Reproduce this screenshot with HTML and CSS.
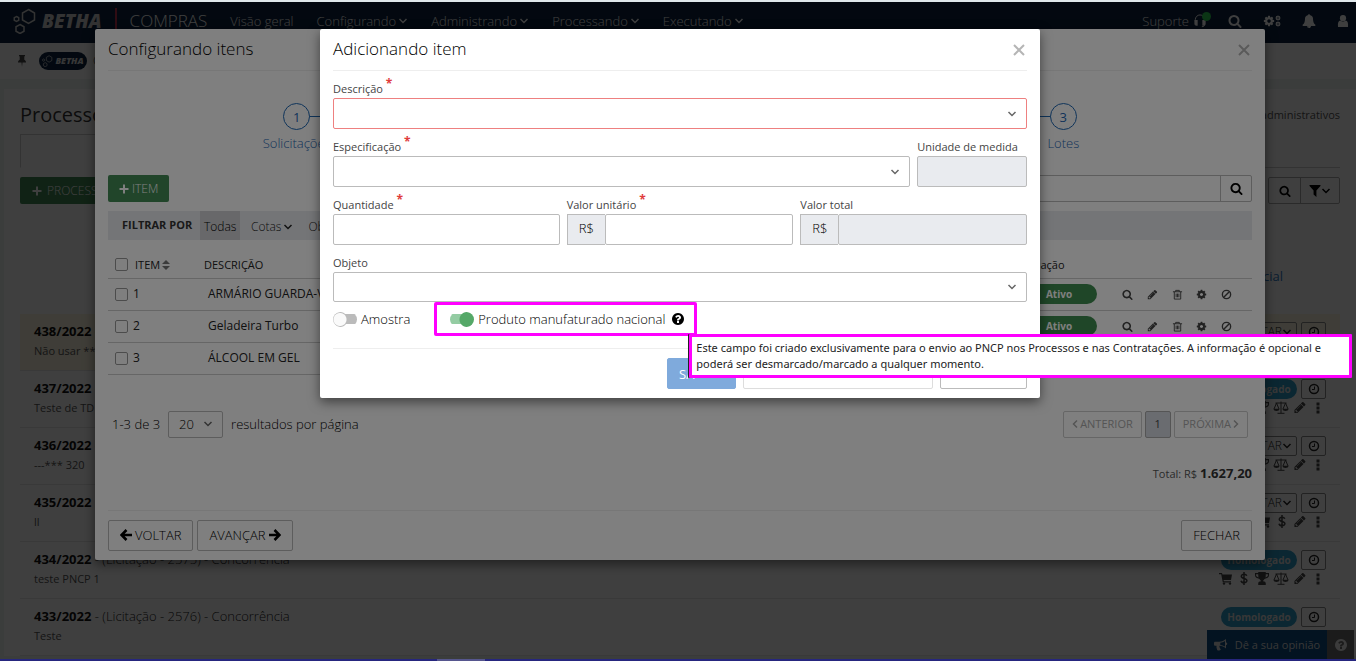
FILE: index.html
```html
<!DOCTYPE html>
<html lang="pt-BR">
<head>
<meta charset="utf-8">
<title>Compras - Processos administrativos</title>
<link rel="stylesheet" href="styles.css">
</head>
<body>
<svg class="sprite" aria-hidden="true">
  <symbol id="search" viewBox="0 0 1792 1792"><path d="M1216 832q0-185-131.500-316.500t-316.500-131.500-316.500 131.500-131.500 316.500 131.500 316.500 316.500 131.500 316.500-131.500 131.500-316.500zm512 832q0 52-38 90t-90 38q-54 0-90-38l-343-342q-179 124-399 124-143 0-273.500-55.500t-225-150-150-225-55.500-273.500 55.500-273.500 150-225 225-150 273.500-55.500 273.500 55.500 225 150 150 225 55.500 273.500q0 220-124 399l343 343q37 37 37 90z"/></symbol>
  <symbol id="pencil" viewBox="0 0 1792 1792"><path d="M491 1536l91-91-235-235-91 91v107h128v128h107zm523-928q0-22-22-22-10 0-17 7l-542 542q-7 7-7 17 0 22 22 22 10 0 17-7l542-542q7-7 7-17zm-54-192l416 416-832 832h-416v-416zm683 96q0 53-37 90l-166 166-416-416 166-165q36-38 90-38 53 0 91 38l235 234q37 39 37 91z"/></symbol>
  <symbol id="bell" viewBox="0 0 1792 1792"><path d="M912 1696q0-16-16-16-59 0-101.500-42.500t-42.500-101.500q0-16-16-16t-16 16q0 73 51.500 124.500t124.500 51.500q16 0 16-16zm816-288q0 52-38 90t-90 38h-448q0 106-75 181t-181 75-181-75-75-181h-448q-52 0-90-38t-38-90q50-42 91-88t85-119.500 74.500-158.500 50-206 19.500-260q0-152 117-282.500t307-158.500q-8-19-8-39 0-40 28-68t68-28 68 28 28 68q0 20-8 39 190 28 307 158.500t117 282.500q0 139 19.500 260t50 206 74.500 158.500 85 119.500 91 88z"/></symbol>
  <symbol id="help" viewBox="0 0 1792 1792"><path d="M1024 1376v-192q0-14-9-23t-23-9h-192q-14 0-23 9t-9 23v192q0 14 9 23t23 9h192q14 0 23-9t9-23zm256-672q0-88-55.500-163t-138.500-116-170-41q-243 0-371 213-15 24 8 42l132 100q7 6 19 6 16 0 25-12 53-68 86-92 34-24 86-24 48 0 85.500 26t37.500 59q0 38-20 61t-68 45q-63 28-115.500 86.500t-52.500 125.500v36q0 14 9 23t23 9h192q14 0 23-9t9-23q0-19 21.500-49.500t54.500-49.500q32-18 49-28.500t46-35 44.500-48 28-60.500 12.500-81zm384 192q0 209-103 385.500t-279.500 279.500-385.500 103-385.500-103-279.500-279.500-103-385.500 103-385.500 279.500-279.500 385.500-103 385.500 103 279.500 279.500 103 385.500z"/></symbol>
  <symbol id="cog" viewBox="0 0 1792 1792"><path d="M1152 896q0-106-75-181t-181-75-181 75-75 181 75 181 181 75 181-75 75-181zm512-109v222q0 12-8 23t-20 13l-185 28q-19 54-39 91 35 50 107 138 10 12 10 25t-9 23q-27 37-99 108t-94 71q-12 0-26-9l-138-108q-44 23-91 38-16 136-29 186-7 28-36 28h-222q-14 0-24.500-8.500t-11.500-21.500l-28-184q-49-16-90-37l-141 107q-10 9-25 9-14 0-25-11-126-114-165-168-7-10-7-23 0-12 8-23 15-21 51-66.500t54-70.500q-27-50-41-99l-183-27q-13-2-21-12.500t-8-23.500v-222q0-12 8-23t19-13l186-28q14-46 39-92-40-57-107-138-10-12-10-24 0-10 9-23 26-36 98.500-107.500t94.500-71.500q13 0 26 10l138 107q44-23 91-38 16-136 29-186 7-28 36-28h222q14 0 24.500 8.500t11.500 21.500l28 184q49 16 90 37l142-107q9-9 24-9 13 0 25 10 129 119 165 170 7 8 7 22 0 12-8 23-15 21-51 66.500t-54 70.500q26 50 41 98l183 28q13 2 21 12.500t8 23.500z"/></symbol>
  <symbol id="chevron" viewBox="0 0 10 10"><path class="line" d="M1.500 3l3.500 3.500L8.500 3"/></symbol>
  <symbol id="left" viewBox="0 0 6 10"><path class="line" d="M5 1.500L1.500 5 5 8.500"/></symbol>
  <symbol id="right" viewBox="0 0 6 10"><path class="line" d="M1 1.500L4.500 5 1 8.500"/></symbol>
  <symbol id="close" viewBox="0 0 12 12"><path class="bold" d="M1 1l10 10M11 1L1 11"/></symbol>
  <symbol id="plus" viewBox="0 0 10 10"><path class="bold" d="M5 .5v9M.5 5h9"/></symbol>
  <symbol id="arrow-left" viewBox="0 0 12 12"><path class="thick" d="M6.500 1L1.500 6l5 5M2 6h10"/></symbol>
  <symbol id="arrow-right" viewBox="0 0 12 12"><path class="thick" d="M5.500 1l5 5-5 5M10 6H0"/></symbol>
  <symbol id="trash" viewBox="0 0 12 12"><path class="thin" d="M1 3h10M4 3V1.500h4V3M2.500 3v8h7V3M4.500 5v4M6 5v4M7.500 5v4"/></symbol>
  <symbol id="ban" viewBox="0 0 12 12"><circle class="line" cx="6" cy="6" r="4.500"/><path class="line" d="M9 3L3 9"/></symbol>
  <symbol id="clock" viewBox="0 0 12 12"><circle class="line" cx="6" cy="6" r="4.500"/><path class="thin" d="M6.500 3.500v3H4"/></symbol>
  <symbol id="cart" viewBox="0 0 14 13"><path d="M0 1h3l.4 1.500H13L12 8H4.600l.2 1.200H12v1.200H3.800L2.200 2.200H0z"/><circle cx="5" cy="11.600" r="1.200"/><circle cx="11" cy="11.600" r="1.200"/></symbol>
  <symbol id="dollar" viewBox="0 0 8 13"><path class="line" d="M6.800 3.800C6.300 2.600 5.200 2.200 4 2.200 2.500 2.200 1.300 3 1.300 4.200c0 3 5.600 1.400 5.600 4.400C6.900 10 5.600 10.800 4 10.800S1.300 10 1 8.800M4 0v13"/></symbol>
  <symbol id="trophy" viewBox="0 0 13 12"><path d="M3 0h7v1h3v2c0 2-2 3-3.700 3.200C8.500 7 7.500 7.500 7.500 8.500c1.500 0 2.500.7 2.500 2V12H3v-1.500c0-1.300 1-2 2.500-2 0-1-1-1.500-1.800-2.300C2 6 0 5 0 3V1h3zM1 2v1c0 1 1 1.700 2.200 2C3 4 3 3 3 2zm9 0c0 1 0 2-.2 3C11 4.700 12 4 12 3V2z"/></symbol>
  <symbol id="scale" viewBox="0 0 16 13"><path class="thin" d="M2.500 2h11M8 .5v11.800M4.500 12.300h7M3.500 2L1 8M3.500 2L6 8M12.500 2L10 8M12.500 2L15 8"/><path d="M.5 7.800h6C6.500 9.500 5 10 3.500 10S.5 9.500.5 7.800zm9 0h6c0 1.700-1.500 2.200-3 2.200s-3-.5-3-2.200z"/></symbol>
  <symbol id="dots" viewBox="0 0 4 12"><path d="M.5.500h3v3h-3zM.5 4.500h3v3h-3zM.5 8.500h3v3h-3z"/></symbol>
  <symbol id="user" viewBox="0 0 12 12"><circle cx="6" cy="3.200" r="3.100"/><path d="M1 12C.6 8 1.500 5.800 3.300 5.600c1.500 1.400 3.900 1.400 5.400 0C10.500 5.800 11.400 8 11 12z"/></symbol>
  <symbol id="headset" viewBox="0 0 14 15"><path class="thin" d="M2 8V6a5 5 0 0 1 10 0v5.500c0 1.500-1 2-3 2"/><path d="M1 6.500h3.500v6H3c-1.200 0-2-.8-2-2zM9.500 6.500H13v4c0 1.200-.8 2-2 2H9.500z"/></symbol>
  <symbol id="funnel" viewBox="0 0 10 11"><path d="M0 0h10v1L6.300 5v6L3.700 8.800V5L0 1z"/></symbol>
  <symbol id="pin" viewBox="0 0 10 12"><path d="M2 0h6v1.200H7.300v3.600C8.500 5.400 9 6.300 9 7.500H5.500L5 12l-.5-4.500H1c0-1.200.5-2.100 1.700-2.700V1.200H2z"/></symbol>
  <symbol id="horn" viewBox="0 0 14 12"><path d="M12 0v3.500a1.200 1.200 0 0 1 0 2.500v3.500C10 7.800 8 7 5.500 6.800 5 8 6 9 6.800 10.500 6 11.800 4 11.800 3.200 11 3 9.500 2 8.500 2.600 6.800H1.300C.5 6.800 0 6.300 0 5.500V4c0-.8.5-1.300 1.300-1.300H5C8 2.700 10 1.600 12 0zm-1 2C9.500 3 8 3.500 6.300 3.700v2.200C8 6 9.500 6.500 11 7.500z"/></symbol>
  <symbol id="sort" viewBox="0 0 8 10"><path d="M4 0l4 4H0zM4 10L0 6h8z"/></symbol>
  <symbol id="hexes" viewBox="0 0 24 26"><path class="line" d="M15.500 1.500l6 3.500v7l-6 3.500-6-3.500V5zM7 16.500l4 2.300v4.400l-4 2.300-4-2.300v-4.400zM3.500 8.500l2.200 1.200v2.600l-2.200 1.200-2.200-1.200V9.700z"/></symbol>
</svg>

<div class="strip-top"></div>

<div class="app">
  <header class="nav">
    <a class="logo" href="#"><svg class="hexes"><use href="#hexes"/></svg><span>BETHA</span></a>
    <span class="product">COMPRAS</span>
    <nav class="menu">
      <a href="#">Visão geral</a>
      <a href="#">Configurando<svg class="i10"><use href="#chevron"/></svg></a>
      <a href="#">Administrando<svg class="i10"><use href="#chevron"/></svg></a>
      <a href="#">Processando<svg class="i10"><use href="#chevron"/></svg></a>
      <a href="#">Executando<svg class="i10"><use href="#chevron"/></svg></a>
    </nav>
    <div class="tools">
      <a class="support" href="#">Suporte<svg class="i14"><use href="#headset"/></svg><i></i></a>
      <a href="#" aria-label="Pesquisar"><svg class="i14"><use href="#search"/></svg></a>
      <a class="cogs" href="#" aria-label="Ferramentas"><svg class="i12"><use href="#cog"/></svg><span><svg><use href="#cog"/></svg><svg><use href="#cog"/></svg></span></a>
      <a href="#" aria-label="Notificações"><svg class="i14"><use href="#bell"/></svg></a>
      <a href="#" aria-label="Usuário"><svg class="i12"><use href="#user"/></svg></a>
    </div>
  </header>

  <div class="favorites">
    <svg class="i12"><use href="#pin"/></svg>
    <span class="chip"><svg><use href="#hexes"/></svg>BETHA</span>
    <span>C</span>
  </div>

  <main class="panel">
    <div class="panel-head"><h1>Processos</h1><span>administrativos</span></div>
    <div class="tabs"><div class="tab"></div></div>
    <div class="actions">
      <button class="btn-green"><svg class="i10"><use href="#plus"/></svg>PROCESSO</button>
      <div class="group">
        <button aria-label="Pesquisar"><svg class="i12"><use href="#search"/></svg></button>
        <button aria-label="Filtrar"><svg class="i12"><use href="#funnel"/></svg><svg class="i10"><use href="#chevron"/></svg></button>
      </div>
    </div>
    <div class="advanced"><a href="#">gerencial</a></div>
    <ul class="list">
      <li class="warm">
        <div><p><b>438/2022</b> -</p><small>Não usar ***</small></div>
        <div class="side"><div><button>EXECUTAR<svg class="i10"><use href="#chevron"/></svg></button><button class="clock" aria-label="Histórico"><svg class="i12"><use href="#clock"/></svg></button></div></div>
      </li>
      <li>
        <div><p><b>437/2022</b> -</p><small>Teste de TD</small></div>
        <div class="side"><div><span class="pill">Homologado</span><button class="clock" aria-label="Histórico"><svg class="i12"><use href="#clock"/></svg></button></div>
        <div class="icons"><svg><use href="#cart"/></svg><svg><use href="#dollar"/></svg><svg><use href="#trophy"/></svg><svg class="wide"><use href="#scale"/></svg><svg><use href="#pencil"/></svg><svg><use href="#dots"/></svg></div></div>
      </li>
      <li>
        <div><p><b>436/2022</b> -</p><small>---*** 320</small></div>
        <div class="side"><div><button>EXECUTAR<svg class="i10"><use href="#chevron"/></svg></button><button class="clock" aria-label="Histórico"><svg class="i12"><use href="#clock"/></svg></button></div>
        <div class="icons"><svg><use href="#cart"/></svg><svg><use href="#dollar"/></svg><svg><use href="#trophy"/></svg><svg class="wide"><use href="#scale"/></svg><svg><use href="#pencil"/></svg><svg><use href="#dots"/></svg></div></div>
      </li>
      <li>
        <div><p><b>435/2022</b></p><small>ll</small></div>
        <div class="side"><div><button>EXECUTAR<svg class="i10"><use href="#chevron"/></svg></button><button class="clock" aria-label="Histórico"><svg class="i12"><use href="#clock"/></svg></button></div>
        <div class="icons"><svg><use href="#cart"/></svg><svg><use href="#dollar"/></svg><svg><use href="#pencil"/></svg><svg><use href="#dots"/></svg></div></div>
      </li>
      <li>
        <div><p><b>434/2022</b> - (Licitação - 2575) - Concorrência</p><small>teste PNCP 1</small></div>
        <div class="side"><div><span class="pill">Homologado</span><button class="clock" aria-label="Histórico"><svg class="i12"><use href="#clock"/></svg></button></div>
        <div class="icons"><svg><use href="#cart"/></svg><svg><use href="#dollar"/></svg><svg><use href="#trophy"/></svg><svg class="wide"><use href="#scale"/></svg><svg><use href="#pencil"/></svg><svg><use href="#dots"/></svg></div></div>
      </li>
      <li>
        <div><p><b>433/2022</b> - (Licitação - 2576) - Concorrência</p><small>Teste</small></div>
        <div class="side"><div><span class="pill">Homologado</span><button class="clock" aria-label="Histórico"><svg class="i12"><use href="#clock"/></svg></button></div></div>
      </li>
    </ul>
  </main>

  <div class="feedback"><button class="opinion"><svg class="i14"><use href="#horn"/></svg>Dê a sua opinião</button><button class="ask" aria-label="Ajuda"><svg class="i14"><use href="#help"/></svg></button></div>

  <div class="backdrop">
    <section class="modal modal-items" role="dialog" aria-labelledby="t1">
      <header class="modal-head"><h2 id="t1">Configurando itens</h2><button aria-label="Fechar"><svg class="i12"><use href="#close"/></svg></button></header>
      <ol class="steps">
        <li><b>1</b><span>Solicitações</span></li>
        <li><b></b></li>
        <li><b>3</b><span>Lotes</span></li>
      </ol>
      <div class="item-actions">
        <button class="btn-green"><svg class="i10"><use href="#plus"/></svg>ITEM</button>
        <div class="search"><input type="text" aria-label="Pesquisar itens"><button aria-label="Pesquisar"><svg class="i12"><use href="#search"/></svg></button></div>
      </div>
      <div class="filters"><strong>FILTRAR POR</strong><a class="on" href="#">Todas</a><a href="#">Cotas<svg class="i10"><use href="#chevron"/></svg></a><a href="#">Ob</a></div>
      <table class="items">
        <thead><tr><th class="c-item"><label><input type="checkbox">ITEM<svg><use href="#sort"/></svg></label></th><th>DESCRIÇÃO</th><th class="c-state">Situação</th><th class="c-acts"></th></tr></thead>
        <tbody>
          <tr><td><label><input type="checkbox">1</label></td><td class="desc">ARMÁRIO GUARDA-V</td><td><span class="pill ok">Ativo</span></td>
            <td><div class="acts"><svg><use href="#search"/></svg><svg><use href="#pencil"/></svg><svg><use href="#trash"/></svg><svg><use href="#cog"/></svg><svg><use href="#ban"/></svg></div></td></tr>
          <tr><td><label><input type="checkbox">2</label></td><td class="desc">Geladeira Turbo</td><td><span class="pill ok">Ativo</span></td>
            <td><div class="acts"><svg><use href="#search"/></svg><svg><use href="#pencil"/></svg><svg><use href="#trash"/></svg><svg><use href="#cog"/></svg><svg><use href="#ban"/></svg></div></td></tr>
          <tr><td><label><input type="checkbox">3</label></td><td class="desc">ÁLCOOL EM GEL</td><td></td><td></td></tr>
        </tbody>
      </table>
      <div class="paging">
        <span>1-3 de 3</span>
        <span class="select"><select aria-label="Resultados por página"><option>20</option></select><svg class="i10"><use href="#chevron"/></svg></span>
        <span>resultados por página</span>
        <div class="pager"><button disabled><svg><use href="#left"/></svg>ANTERIOR</button><button class="current">1</button><button disabled>PRÓXIMA<svg><use href="#right"/></svg></button></div>
      </div>
      <p class="total">Total: R$ <b>1.627,20</b></p>
      <footer class="modal-foot">
        <button class="btn"><svg class="i12"><use href="#arrow-left"/></svg>VOLTAR</button>
        <button class="btn">AVANÇAR<svg class="i12"><use href="#arrow-right"/></svg></button>
        <button class="btn end">FECHAR</button>
      </footer>
    </section>
  </div>

  <div class="backdrop">
    <section class="modal modal-add" role="dialog" aria-labelledby="t2">
      <header class="modal-head"><h2 id="t2">Adicionando item</h2><button aria-label="Fechar"><svg class="i12"><use href="#close"/></svg></button></header>
      <form class="form">
        <div class="field wide invalid"><label for="desc">Descrição <sup>*</sup></label><span class="select"><select id="desc"></select><svg class="i10"><use href="#chevron"/></svg></span></div>
        <div class="field spec"><label for="spec">Especificação <sup>*</sup></label><span class="select"><select id="spec"></select><svg class="i10"><use href="#chevron"/></svg></span></div>
        <div class="field unit"><label for="unit">Unidade de medida</label><input id="unit" type="text" disabled></div>
        <div class="field"><label for="qty">Quantidade <sup>*</sup></label><input id="qty" type="text"></div>
        <div class="field"><label for="price">Valor unitário <sup>*</sup></label><div class="money"><span>R$</span><input id="price" type="text"></div></div>
        <div class="field"><label for="sum">Valor total</label><div class="money"><span>R$</span><input id="sum" type="text" disabled></div></div>
        <div class="field wide"><label for="obj">Objeto</label><span class="select"><select id="obj"></select><svg class="i10"><use href="#chevron"/></svg></span></div>
      </form>
      <div class="switches">
        <label class="switch"><input type="checkbox">Amostra</label>
        <div class="marked">
          <label class="switch"><input type="checkbox" checked>Produto manufaturado nacional</label>
          <svg class="i14"><use href="#help"/></svg>
          <div class="tip" role="tooltip">Este campo foi criado exclusivamente para o envio ao PNCP nos Processos e nas Contratações. A informação é opcional e poderá ser desmarcado/marcado a qualquer momento.</div>
        </div>
      </div>
      <footer class="modal-foot right">
        <button class="btn primary" aria-label="Salvar">SA</button>
        <button class="btn soft" aria-label="Salvar e adicionar outro"></button>
        <button class="btn" aria-label="Cancelar"></button>
      </footer>
    </section>
  </div>
</div>

<div class="strip-bottom"><i></i></div>
</body>
</html>
```
FILE: styles.css
```css
* { box-sizing: border-box; }
html, body { height: 100%; }
body {
  margin: 0;
  display: flex;
  flex-direction: column;
  overflow: hidden;
  font: 300 13px/18px "Open Sans", "Noto Sans", sans-serif;
  color: #000;
}
h1, h2, p, ul, ol { margin: 0; padding: 0; font-weight: 300; list-style: none; }
a { color: inherit; text-decoration: none; }
button, input, select { font: inherit; color: inherit; margin: 0; }
button { display: flex; align-items: center; justify-content: center; padding: 0; border: 0; background: none; white-space: nowrap; }
svg { fill: currentColor; flex: none; }
.sprite { position: absolute; width: 0; height: 0; }
.line, .thin, .thick, .bold { fill: none; stroke: currentColor; stroke-width: 1.5; }
.thin { stroke-width: 1; }
.bold { stroke-width: 2; }
.thick { stroke-width: 2.6; }
.i10 { width: 10px; height: 10px; }
.i12 { width: 12px; height: 12px; }
.i14 { width: 14px; height: 14px; }

.strip-top { flex: none; height: 2px; background: #dfe7eb; }
.strip-bottom { flex: none; height: 2px; background: #26267e; display: flex; justify-content: center; padding-right: 434px; }
.strip-bottom i { width: 48px; background: #56568e; }
.app { flex: 1; min-height: 0; position: relative; overflow: hidden; background: #eef4f2; }

/* top navigation */
.nav { display: flex; align-items: center; height: 41px; padding: 0 7px 3px 13px; background: #0c2340; color: #fff; }
.logo { display: flex; align-items: center; gap: 5px; padding-right: 13px; border-right: 2px solid #c0304c; font: italic 800 19px/22px "Open Sans", sans-serif; color: #ccc; }
.hexes { width: 24px; height: 26px; }
.product { padding: 0 23px 0 13px; font-size: 17px; }
.menu { display: flex; gap: 23px; }
.menu a { display: flex; align-items: center; gap: 2px; }
.tools { display: flex; align-items: center; gap: 21px; margin-left: auto; }
.tools a { display: flex; align-items: center; }
.support { position: relative; gap: 4px; }
.support i { position: absolute; right: -4px; top: 0; width: 9px; height: 9px; border-radius: 50%; background: #2cd455; }
.cogs span { display: flex; flex-direction: column; }
.cogs span svg { width: 6px; height: 6px; }

.favorites { display: flex; align-items: center; gap: 6px; height: 36px; padding-left: 16px; background: #fff; color: #444; font-size: 12px; }
.favorites > svg { margin-right: 5px; }
.chip { display: flex; align-items: center; justify-content: center; gap: 2px; width: 48px; height: 18px; border-radius: 9px; background: #0c2340; color: #ddd; font: italic 800 9px/12px "Open Sans", sans-serif; }
.chip svg { width: 11px; height: 12px; }

/* process list */
.panel { margin: 10px 0 0 4px; padding: 14px 16px 0; background: #fff; }
.panel-head { display: flex; align-items: center; justify-content: space-between; height: 24px; margin-bottom: 2px; font-size: 11px; font-weight: 400; color: #555; }
.panel-head h1 { font-size: 20px; line-height: 28px; font-weight: 400; color: #333; }
.tabs { display: flex; height: 34px; margin-top: 7px; border-bottom: 1px solid #ccc; }
.tab { width: 300px; height: 34px; border: 1px solid #ccc; border-bottom: 1px solid #fff; }
.actions { display: flex; justify-content: space-between; margin-top: 9px; }
.btn-green { gap: 3px; height: 27px; padding: 0 11px; border-radius: 2px; background: #428a55; color: #fff; font-size: 12px; }
.actions .btn-green { gap: 5px; padding: 0 12px; }
.group { display: flex; border: 1px solid #aaa; border-radius: 2px; }
.group button { width: 31px; height: 25px; }
.group button + button { width: 39px; border-left: 1px solid #aaa; }
.advanced { display: flex; justify-content: flex-end; padding: 63px 57px 29px 0; color: #2e79c4; font-weight: 400; }
.list li { display: flex; justify-content: space-between; height: 57px; padding: 8px 14px 0; border-bottom: 1px solid #e6e6e6; color: #222; }
.list li.warm { background: #fdf6e0; }
.list b { font-weight: 700; color: #111; }
.list small { display: block; margin-top: 3px; font-size: 11px; line-height: 16px; font-weight: 400; color: #555; }
.side > div { display: flex; gap: 4px; justify-content: flex-end; }
.side button { height: 20px; padding: 0 4px; border: 1px solid #888; border-radius: 2px; font-size: 12px; }
.side .clock { width: 25px; padding: 0; }
.side .icons { align-items: center; gap: 4px; padding-right: 6px; margin-top: 2px; color: #444; }
.icons svg { width: 14px; height: 13px; }
.icons .wide { width: 16px; }
.icons svg:last-child { width: 4px; margin-left: 5px; height: 12px; }
.pill { display: flex; align-items: center; justify-content: center; width: 76px; height: 20px; border-radius: 10px; background: #2c9dc8; color: #ddd; font-size: 10px; font-weight: 700; }

.feedback { position: absolute; right: 2px; bottom: 0; display: flex; height: 29px; font-size: 11px; font-weight: 400; color: #ddd; }
.opinion { gap: 7px; width: 120px; background: #0c4c84; }
.ask { width: 27px; background: #6c6c6c; color: #eee; }

/* dialogs */
.backdrop { position: absolute; inset: 0; padding: 27px 0 0 4px; background: rgba(0, 0, 0, .5); }
.modal { margin: 0 auto; padding: 0 13px; border-radius: 2px; background: #fff; box-shadow: 0 4px 12px rgba(0, 0, 0, .5); }
.modal-items { max-width: 1170px; }
.modal-add { max-width: 720px; }
.modal-head { display: flex; align-items: center; justify-content: space-between; height: 42px; border-bottom: 1px solid #eee; }
.modal-head h2 { padding-bottom: 2px; font-size: 17px; line-height: 22px; }
.modal-head button { width: 16px; height: 16px; color: #b5b5b5; }
.steps { display: flex; margin: 32px -3px 0; color: #1f68b4; font-weight: 300; }
.steps li { flex: 1; display: flex; flex-direction: column; align-items: center; gap: 4px; background: linear-gradient(#1f68b4, #1f68b4) 0 13px / 100% 1px no-repeat; }
.steps b { display: grid; place-items: center; width: 27px; height: 27px; border: 1px solid; border-radius: 50%; background: #fff; font-weight: 400; }
.steps li:first-child { background-size: 50% 1px; background-position: 100% 13px; }
.steps li:last-child { background-size: 50% 1px; }
.item-actions { display: flex; justify-content: space-between; margin-top: 23px; }
.search { display: flex; width: 400px; height: 27px; border: 1px solid #bbb; border-radius: 2px; }
.search input { flex: 1; border: 0; background: none; }
.search button { width: 31px; border-left: 1px solid #bbb; }
.search svg { width: 13px; height: 13px; }
.filters { display: flex; height: 29px; margin-top: 9px; padding-left: 14px; background: #e9ebef; font-size: 12px; color: #222; }
.filters strong { width: 78px; font-size: 11px; line-height: 28px; font-weight: 700; color: #333; }
.filters a { display: flex; align-items: center; gap: 2px; padding: 2px 4px 0 11px; }
.filters .on { width: 40px; padding: 2px 4px 0; background: #d0d1d4; color: #000; }
.items { width: 100%; border-collapse: collapse; table-layout: fixed; font-size: 12px; font-weight: 400; color: #222; }
.items th, .items td { height: 32px; padding: 0; text-align: left; font-weight: inherit; border-bottom: 1px solid #ccc; }
.items th { height: 38px; padding-top: 12px; font-size: 11px; }
.items label { display: flex; align-items: center; gap: 7px; padding-left: 7px; }
.items th svg { width: 8px; height: 10px; margin-left: -5px; color: #777; }
.items td label { gap: 5px; }
.items input { appearance: none; width: 13px; height: 13px; border: 1px solid #999; border-radius: 2px; }
.c-item { width: 96px; }
.c-state { width: 93px; }
.c-acts { width: 138px; }
.items td.desc { padding-left: 4px; }
.pill.ok { width: 76px; background: #3f8c50; color: #fff; }
.acts { display: flex; justify-content: space-between; width: 110px; margin-left: 8px; color: #444; }
.acts svg { width: 11px; height: 11px; }
.paging { display: flex; align-items: center; gap: 8px; margin-top: 36px; padding: 0 4px 0 4px; }
.select { position: relative; display: flex; }
.select select { width: 100%; appearance: none; background: #fff; border: 1px solid #bbb; border-radius: 2px; }
.select svg { position: absolute; right: 10px; top: 50%; margin-top: -5px; color: #666; }
.paging .select { width: 55px; }
.paging select { height: 27px; padding-left: 10px; }
.pager { display: flex; gap: 3px; margin-left: auto; font-size: 11px; font-weight: 400; }
.pager button { gap: 2px; height: 27px; padding: 0 8px; border: 1px solid #ccc; border-radius: 2px; color: #aaa; }
.pager svg { width: 6px; height: 10px; }
.pager .current { width: 26px; background: #d4d8e0; border-color: #aaa; color: #444; }
.total { margin: 26px 0 27px; text-align: right; font-size: 11px; font-weight: 400; color: #555; }
.total b { font-size: 13px; color: #333; }
.modal-foot { display: flex; gap: 4px; padding: 9px 0; border-top: 1px solid #eee; }
.modal-foot.right { justify-content: flex-end; gap: 7px; margin-top: 12px; }
.btn { gap: 3px; height: 31px; padding: 0 11px; border: 1px solid #bbb; border-radius: 2px; background: #fff; }
.btn.end { margin-left: auto; }
.btn.primary { width: 69px; justify-content: flex-start; border-color: #7faadc; background: #7faadc; color: #fff; font-weight: 400; }
.btn.soft { width: 190px; border-color: #ddd; }
.modal-foot.right .btn:last-child { width: 87px; }

/* item form */
.form { display: grid; grid-template-columns: repeat(12, 1fr); gap: 9px 7px; padding-top: 9px; font-size: 13px; }
.field { grid-column: span 4; }
.field.wide { grid-column: span 12; }
.field.spec { grid-column: span 10; }
.field.unit { grid-column: span 2; }
.field > label { display: block; height: 18px; font-size: 11px; font-weight: 400; color: #444; }
.field sup { font-size: 12px; line-height: 0; font-weight: 700; color: #e03c3c; }
.field input, .field select { width: 100%; height: 31px; border: 1px solid #bbb; border-radius: 2px; }
#obj { height: 30px; }
.field input:disabled { background: #e9ebef; }
.invalid select { border-color: #ee8080; }
.money { display: flex; }
.money span { flex: none; width: 38px; height: 31px; padding-left: 11px; line-height: 27px; border: 1px solid #bbb; border-right: 0; background: #e9ebef; }
.switches { display: flex; align-items: center; gap: 24px; }
.switch { display: flex; align-items: center; gap: 4px; }
.switch input { appearance: none; width: 24px; height: 15px; border-radius: 8px; background: radial-gradient(circle at 7px 50%, #fafafa 6px, #bbb 7px, transparent 8px), linear-gradient(#bbb, #bbb) 0 50% / 100% 10px no-repeat; }
.switch input:checked { background: radial-gradient(circle at 17px 50%, #55a868 7px, transparent 8px), linear-gradient(#94cca3, #94cca3) 0 50% / 100% 10px no-repeat; }
.marked { position: relative; display: flex; align-items: center; gap: 6px; height: 34px; padding: 0 9px 0 13px; border: 3px solid #f0f; border-radius: 2px; }
.tip { position: absolute; left: 252px; top: 29px; width: 663px; padding: 3px 4px; border: 3px solid #f0f; border-radius: 1px; box-shadow: -1px 0 #222; background: #fff; color: #222; font: 400 11px/16px "Noto Sans", "Open Sans", sans-serif; }
```
